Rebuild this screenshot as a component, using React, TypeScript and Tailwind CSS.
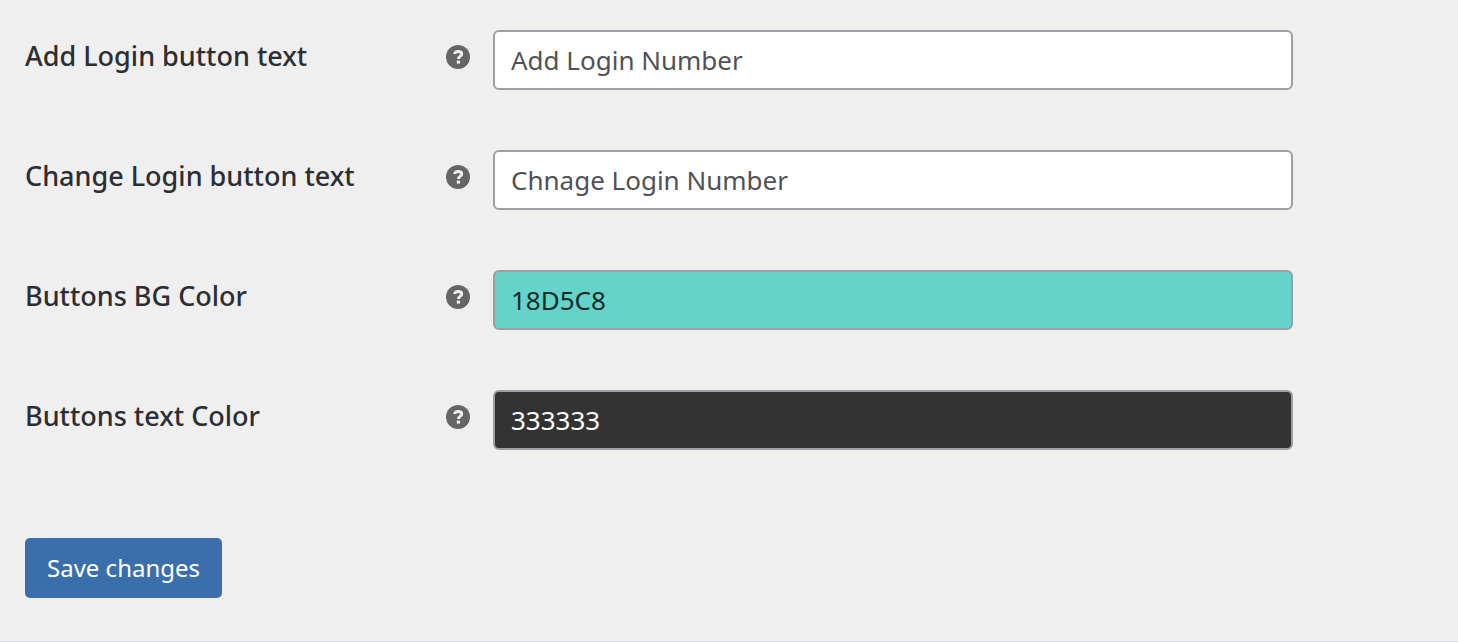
import React from "react";

type Field = { id: string; label: string; help: string; value: string; tone: string };

const fields: Field[] = [
  { id: "add-text", label: "Add Login button text", help: "Text of the add button", value: "Add Login Number", tone: "bg-white text-[#505256]" },
  { id: "change-text", label: "Change Login button text", help: "Text of the change button", value: "Chnage Login Number", tone: "bg-white text-[#505256]" },
  { id: "bg-color", label: "Buttons BG Color", help: "Background colour of the buttons", value: "18D5C8", tone: "bg-[#65d3c9] text-[#102c2a]" },
  { id: "text-color", label: "Buttons text Color", help: "Text colour of the buttons", value: "333333", tone: "bg-[#333333] text-white" },
];

function HelpIcon() {
  return (
    <svg viewBox="0 0 24 24" className="size-6" aria-hidden="true">
      <circle cx="12" cy="12" r="12" fill="#666666" />
      <path d="M8.700 9C9 7 10.300 6.400 12.200 6.400c2.200 0 3.500 1 3.500 2.700 0 2.300-3.300 2.300-3.300 4.900" fill="none" stroke="#efefef" strokeWidth="3" />
      <rect x="10.800" y="15.600" width="3.200" height="3" fill="#efefef" />
    </svg>
  );
}

export default function App() {
  return (
    <form
      className="min-h-screen border-b border-[#d3d8de] bg-[#efefef] px-[25px] pt-[30px] pb-[43px] font-['Noto_Sans','Open_Sans',sans-serif]"
      onSubmit={(e) => e.preventDefault()}
    >
      <div className="flex flex-col gap-[60px]">
        {fields.map((f) => (
          <div key={f.id} className="flex items-start">
            <div className="flex w-[468px] shrink-0 items-start justify-between pt-2 pr-[23px]">
              <label htmlFor={f.id} className="text-[27px] leading-[36px] font-medium text-[#2c2e33]">
                {f.label}
              </label>
              <button type="button" aria-label={f.help} className="mt-[7px]">
                <HelpIcon />
              </button>
            </div>
            <input
              id={f.id}
              type="text"
              defaultValue={f.value}
              className={`h-[60px] w-full max-w-[800px] rounded-md border-2 border-[#9c9ea3] px-4 text-[26px] ${f.tone}`}
            />
          </div>
        ))}
      </div>
      <button type="submit" className="mt-[88px] h-[60px] rounded-[5px] bg-[#3b6fab] px-[22px] text-[24px] text-white">
        Save changes
      </button>
    </form>
  );
}
